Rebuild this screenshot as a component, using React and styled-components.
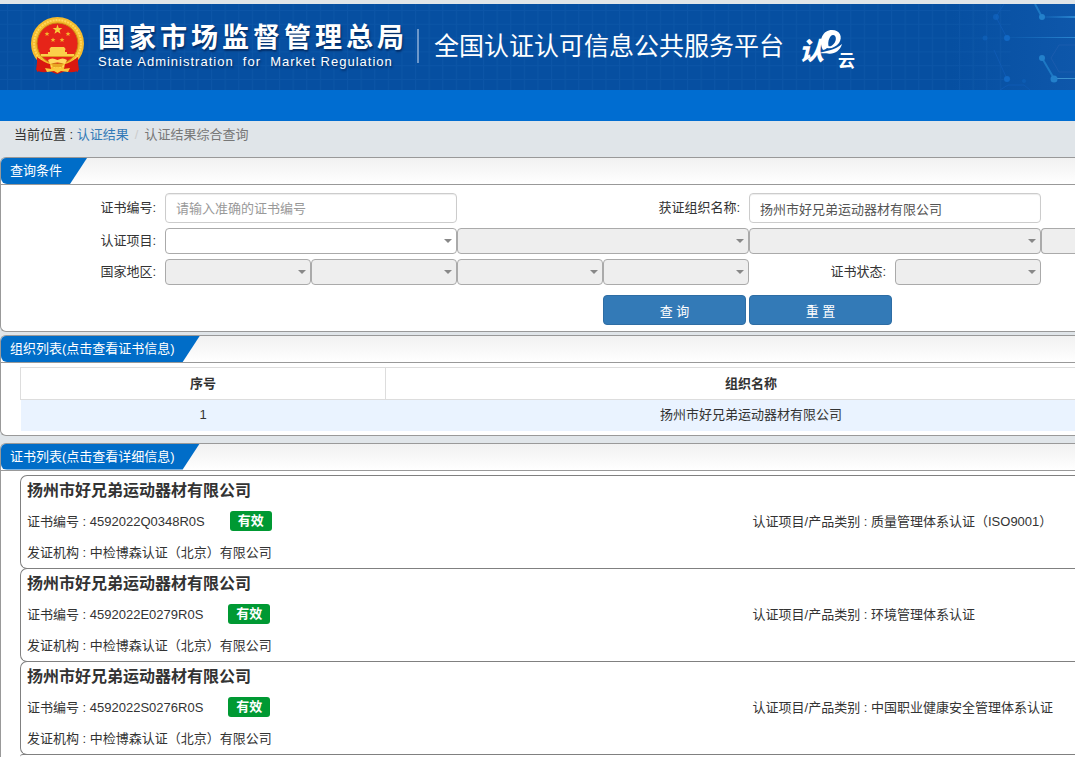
import React, { useState } from "react";
import styled, { createGlobalStyle } from "styled-components";

const certList = [
  {
    id: 1,
    org: "扬州市好兄弟运动器材有限公司",
    number: "4592022Q0348R0S",
    agency: "中检博森认证（北京）有限公司",
    category: "质量管理体系认证（ISO9001）",
  },
  {
    id: 2,
    org: "扬州市好兄弟运动器材有限公司",
    number: "4592022E0279R0S",
    agency: "中检博森认证（北京）有限公司",
    category: "环境管理体系认证",
  },
  {
    id: 3,
    org: "扬州市好兄弟运动器材有限公司",
    number: "4592022S0276R0S",
    agency: "中检博森认证（北京）有限公司",
    category: "中国职业健康安全管理体系认证",
  },
];

const orgList = [{ id: 1, name: "扬州市好兄弟运动器材有限公司" }];

const Emblem = () => (
  <StEmblem viewBox="0 0 53 57" aria-hidden="true">
    <path d="M7 38 L5 53 Q12 57 18 54 L26 57 L35 54 Q41 57 48 53 L46 38 Z" fill="#d3170f" />
    <circle cx="26.5" cy="26.5" r="26.5" fill="#f6bb2c" />
    <circle cx="26.5" cy="26.5" r="23.5" fill="none" stroke="#ffd75a" strokeWidth="2" strokeDasharray="2 1" />
    <circle cx="26.5" cy="26.5" r="20.5" fill="#e62419" stroke="#c98914" strokeWidth="1" />
    <path d="M26.5 7.5 l1.2 3.4 3.6 .1 -2.8 2.2 1 3.5 -3 -2 -3 2 1 -3.5 -2.8 -2.2 3.6 -.1 z" fill="#f8cf3c" />
    <path
      d="M16 14.5 l.7 1.6 1.8 .1 -1.4 1.1 .5 1.7 -1.6 -1 -1.5 1 .4 -1.7 -1.3 -1.1 1.8 -.1z M37 14.5 l.7 1.6 1.8 .1 -1.4 1.1 .5 1.7 -1.6 -1 -1.5 1 .4 -1.7 -1.3 -1.1 1.8 -.1z M22 20.5 l.7 1.6 1.8 .1 -1.4 1.1 .5 1.7 -1.6 -1 -1.5 1 .4 -1.7 -1.3 -1.1 1.8 -.1z M31 20.5 l.7 1.6 1.8 .1 -1.4 1.1 .5 1.7 -1.6 -1 -1.5 1 .4 -1.7 -1.3 -1.1 1.8 -.1z"
      fill="#f3b52d"
    />
    <path d="M20 30 h13 l2 2.5 h-1 v2.5 h2 v2 h7 v2.5 H10 V37 h7 v-2 h2 v-2.5 h-1 z" fill="#fbd04a" />
    <path d="M10 39.5 h33" stroke="#e09a20" strokeWidth="1" />
    <path d="M6 40 Q14 46 19 47 L20 52 Q14 51 6 55 Z M47 40 Q39 46 34 47 L33 52 Q39 51 47 55 Z" fill="#d9180f" />
    <path d="M17 43 Q21 40 26.5 43 Q32 40 36 43 L34 47 Q26.5 44 19 47 Z" fill="#ffd95f" />
    <path d="M21 47 H32 L31 50 H22 Z" fill="#e9a623" />
    <path d="M14 51 L20 52 L26.5 50 L33 52 L39 51 L37 55 L30 54 L26.5 56 L23 54 L16 55 Z" fill="#fbc93d" />
  </StEmblem>
);

const CloudLogo = () => (
  <StCloudLogo viewBox="0 0 58 42" role="img" aria-label="认e云">
    <text x="0" y="31" fontSize="25" fontWeight="900" fontStyle="italic" fill="#fff">
      认
    </text>
    <path
      d="M24 21 C19 11 24 1 33 1 C41 1 44 8 40 14 C37 18 32 20 28 19 C27 20 25 21 24 21 Z M29.5 17 C28.5 12 31 6 34 6 C38 6 38 13 33 16.5 C31.5 17.5 30 17.6 29.5 17 Z"
      fill="#fff"
      fillRule="evenodd"
    />
    <path d="M20 24 C28 22 36 21 43 15 C41 22 35 25.5 29 24.5 C26 23.8 22 24.5 20 24 Z" fill="#fff" />
    <text x="39" y="38" fontSize="17" fontWeight="700" fill="#fff">
      云
    </text>
  </StCloudLogo>
);

// 头部右侧的电路装饰
const Circuit = () => (
  <StCircuit viewBox="0 0 125 86" aria-hidden="true">
    <defs>
      <linearGradient id="trace" x1="0" x2="1">
        <stop offset="0" stopColor="#1c79c9" stopOpacity="0.1" />
        <stop offset="1" stopColor="#2b86d0" />
      </linearGradient>
      <linearGradient id="glow" x1="0" x2="1">
        <stop offset="0" stopColor="#1a63b8" stopOpacity="0" />
        <stop offset="1" stopColor="#1a63b8" stopOpacity="0.4" />
      </linearGradient>
    </defs>
    <rect width="125" height="86" fill="url(#glow)" />
    <path d="M54 0 L46 13 L57 34 M44 46 L57 75 M50 86 L58 81 L74 81 L80 86" fill="none" stroke="#0f5ab3" />
    <path d="M85 0 L92 13 M92 54 L104 74.5" fill="none" stroke="#1d78c4" strokeWidth="2" />
    <rect x="92" y="12" width="33" height="2" fill="url(#trace)" />
    <rect x="57" y="33" width="68" height="1" fill="url(#trace)" />
    <rect x="104" y="74" width="21" height="1" fill="#3b91cf" />
    <path d="M125 41 H109 L101 54 L109 68 H125" fill="none" stroke="#1b5cae" />
    <g fill="#1268c4">
      <circle cx="46" cy="13" r="3" opacity="0.6" />
      <circle cx="35" cy="34" r="2.5" opacity="0.5" />
      <circle cx="57" cy="34" r="3" />
      <circle cx="57" cy="75" r="3" />
      <circle cx="74" cy="77" r="2" opacity="0.4" />
    </g>
    <g fill="#2380cb">
      <circle cx="92" cy="13" r="3" />
      <circle cx="92" cy="54" r="3" />
      <circle cx="104" cy="75" r="3.5" />
    </g>
  </StCircuit>
);

const SelectField = ({ label, span = 1, disabled, cut }) => (
  <StSelectBox $span={span}>
    <StSelect aria-label={label} disabled={disabled} $cut={cut}>
      <option></option>
    </StSelect>
    {!cut && <StArrow />}
  </StSelectBox>
);

const Panel = ({ title, gap, open, children }) => (
  <StPanel $gap={gap} $open={open}>
    <StPanelHead>
      <StTab>{title}</StTab>
    </StPanelHead>
    {children}
  </StPanel>
);

const App = () => {
  const [certNo, setCertNo] = useState("");
  const [orgName, setOrgName] = useState("扬州市好兄弟运动器材有限公司");

  const onSubmitHandler = (event) => {
    event.preventDefault();
  };

  const onResetHandler = () => {
    setCertNo("");
    setOrgName("");
  };

  return (
    <>
      <GlobalStyle />
      <StHeader>
        <StGridLines aria-hidden="true">
          <defs>
            <pattern id="cells" width="13.6" height="13.8" x="7" y="6" patternUnits="userSpaceOnUse">
              <path d="M0.5 0 V14 M0 0.5 H14" stroke="#1560b0" strokeOpacity="0.4" fill="none" />
            </pattern>
          </defs>
          <rect width="100%" height="100%" fill="url(#cells)" />
        </StGridLines>
        <Circuit />
        <StBrand>
          <Emblem />
          <StBureau>
            <StBureauName>国家市场监督管理总局</StBureauName>
            <StBureauEn>State Administration  for  Market Regulation</StBureauEn>
          </StBureau>
          <StDivider />
          <StPlatform>全国认证认可信息公共服务平台</StPlatform>
          <CloudLogo />
        </StBrand>
      </StHeader>
      <StNav />

      <StBreadcrumb>
        当前位置 :&nbsp;<a href="#result">认证结果</a>
        <StSlash>/</StSlash>
        <StCurrent>认证结果综合查询</StCurrent>
      </StBreadcrumb>

      <Panel title="查询条件" gap={3}>
        <StForm onSubmit={onSubmitHandler}>
          <StRow $height={30}>
            <StLabel htmlFor="certNo">证书编号:</StLabel>
            <StInput
              id="certNo"
              type="text"
              placeholder="请输入准确的证书编号"
              value={certNo}
              onChange={(e) => setCertNo(e.target.value)}
            />
            <StLabel htmlFor="orgName" $span={2}>获证组织名称:</StLabel>
            <StInput
              id="orgName"
              type="text"
              value={orgName}
              onChange={(e) => setOrgName(e.target.value)}
            />
          </StRow>
          <StRow $height={26}>
            <StLabel as="span">认证项目:</StLabel>
            <SelectField label="认证项目" span={2} />
            <SelectField label="认证项目二级" span={2} disabled />
            <SelectField label="认证项目三级" span={2} disabled />
            <SelectField label="认证项目四级" disabled cut />
          </StRow>
          <StRow $height={26}>
            <StLabel as="span">国家地区:</StLabel>
            <SelectField label="国家" disabled />
            <SelectField label="省" disabled />
            <SelectField label="市" disabled />
            <SelectField label="区" disabled />
            <StLabel as="span">证书状态:</StLabel>
            <SelectField label="证书状态" disabled />
          </StRow>
          <StActions $height={30}>
            <StButton type="submit" $start={5}>查 询</StButton>
            <StButton type="button" onClick={onResetHandler}>重 置</StButton>
          </StActions>
        </StForm>
      </Panel>

      <Panel title="组织列表(点击查看证书信息)" gap={7}>
        <StTableWrap>
          <StTable>
            <thead>
              <tr>
                <StTh $width="33.3%">序号</StTh>
                <StTh>组织名称</StTh>
              </tr>
            </thead>
            <tbody>
              {orgList.map((org) => (
                <tr key={org.id}>
                  <StTd>{org.id}</StTd>
                  <StTd>{org.name}</StTd>
                </tr>
              ))}
            </tbody>
          </StTable>
        </StTableWrap>
      </Panel>

      <Panel title="证书列表(点击查看详细信息)" open>
        <StCards>
          {certList.map((cert) => (
            <StCard key={cert.id}>
              <StCardTitle>{cert.org}</StCardTitle>
              <StCardRow>
                <StNumber>
                  证书编号 : {cert.number}
                  <StBadge>有效</StBadge>
                </StNumber>
                <span>认证项目/产品类别 : {cert.category}</span>
              </StCardRow>
              <StCardRow>
                <span>发证机构 : {cert.agency}</span>
              </StCardRow>
            </StCard>
          ))}
          <StCardEdge />
        </StCards>
      </Panel>
    </>
  );
};

export default App;

const GlobalStyle = createGlobalStyle`
  * {
    box-sizing: border-box;
  }

  body {
    margin: 0;
    padding-top: 4px;
    overflow-x: hidden;
    background-color: #e0e5e9;
    color: #333;
    font-family: "Liberation Sans", "Noto Sans CJK SC", sans-serif;
    font-size: 13px;
    line-height: 20px;
  }

  input, select, button {
    font-family: inherit;
    font-size: 13px;
  }

  a {
    color: #337ab7;
    text-decoration: none;
  }
`;

const StHeader = styled.header`
  position: relative;
  height: 86px;
  background-color: #064fa1;
  color: #fff;
`;

const StGridLines = styled.svg`
  position: absolute;
  top: 0;
  left: 0;
  width: 94%;
  height: 100%;
`;

const StCircuit = styled.svg`
  position: absolute;
  top: 0;
  right: 0;
  width: 125px;
  height: 86px;
`;

const StBrand = styled.div`
  position: relative;
  display: flex;
  align-items: center;
  height: 83px;
  padding-left: 31px;
  white-space: nowrap;
`;

const StEmblem = styled.svg`
  width: 53px;
  height: 57px;
  margin-right: 14px;
  flex-shrink: 0;
`;

const StBureau = styled.div`
  width: 319px;
  text-shadow: 1px 2px 2px rgba(0, 20, 60, 0.6);
`;

const StBureauName = styled.div`
  font-size: 27px;
  font-weight: 700;
  line-height: 32px;
  letter-spacing: 4px;
`;

const StBureauEn = styled.div`
  font-size: 13px;
  line-height: 16px;
  letter-spacing: 1px;
  white-space: pre;
`;

const StDivider = styled.div`
  width: 2px;
  height: 34px;
  margin-right: 15px;
  background-color: #6d98cb;
`;

const StPlatform = styled.div`
  font-size: 25px;
  line-height: 40px;
`;

const StCloudLogo = styled.svg`
  width: 58px;
  height: 42px;
  margin: 8px 0 0 15px;
  font-family: "Noto Sans CJK SC", sans-serif;
`;

const StNav = styled.nav`
  height: 31px;
  background-color: #006dd1;
`;

const StBreadcrumb = styled.nav`
  display: flex;
  height: 36px;
  padding: 4px 14px;
`;

const StSlash = styled.span`
  padding: 0 6px;
  color: #ccc;
`;

const StCurrent = styled.span`
  color: #777;
`;

const StPanel = styled.section`
  margin-bottom: ${({ $gap }) => $gap || 0}px;
  border: 1px solid #999;
  border-right: none;
  border-bottom-width: ${({ $open }) => ($open ? 0 : 1)}px;
  border-radius: ${({ $open }) => ($open ? "6px 0 0 0" : "6px 0 0 6px")};
  background-color: #fff;
  overflow: hidden;
`;

const StPanelHead = styled.div`
  height: 27px;
  border-bottom: 1px solid #999;
  background: linear-gradient(#f1f1f1, #fff);
`;

const StTab = styled.h2`
  display: inline-block;
  height: 26px;
  margin: 0;
  padding: 0 25px 0 9px;
  border-radius: 0 0 0 6px;
  background-color: #006dc8;
  clip-path: polygon(0 0, 100% 0, calc(100% - 17px) 100%, 0 100%);
  color: #fff;
  font-size: 13px;
  font-weight: 400;
  line-height: 26px;
`;

const StForm = styled.form`
  display: grid;
  gap: 5px;
  padding: 8px 0 6px 18px;
`;

const StRow = styled.div`
  display: grid;
  grid-template-columns: repeat(7, 1fr) 34px;
  height: ${({ $height }) => $height}px;
`;

const StActions = styled(StRow)`
  margin-top: 5px;
`;

const StLabel = styled.label`
  grid-column: span ${({ $span }) => $span || 1};
  align-self: center;
  padding-right: 9px;
  text-align: right;
`;

const StInput = styled.input`
  grid-column: span 2;
  min-width: 0;
  padding: 0 10px;
  border: 1px solid #ccc;
  border-radius: 4px;
  background-color: #fff;
  color: #555;
  box-shadow: inset 0 1px 1px rgba(0, 0, 0, 0.075);

  &::placeholder {
    color: #999;
  }
`;

const StSelectBox = styled.div`
  position: relative;
  grid-column: span ${({ $span }) => $span};
`;

const StSelect = styled.select`
  display: block;
  appearance: none;
  width: 100%;
  height: 100%;
  padding: 0 20px 0 8px;
  border: 1px solid #aaa;
  border-right-width: ${({ $cut }) => ($cut ? 0 : 1)}px;
  border-radius: ${({ $cut }) => ($cut ? "4px 0 0 4px" : "4px")};
  background-color: #fff;
  color: #444;

  &:disabled {
    background-color: #eee;
    opacity: 1;
  }
`;

const StArrow = styled.span`
  position: absolute;
  top: 11px;
  right: 5px;
  border: 4px solid transparent;
  border-top-color: #888;
  border-bottom: none;
  pointer-events: none;
`;

const StButton = styled.button`
  grid-column-start: ${({ $start }) => $start || "auto"};
  margin-right: 3px;
  padding: 0;
  border: 1px solid #2e6da4;
  border-radius: 4px;
  background-color: #337ab7;
  color: #fff;
  cursor: pointer;
`;

const StTableWrap = styled.div`
  margin: 4px 0 4px 19px;
  overflow: hidden;
`;

// 表格比窗口略宽，右侧被裁掉
const StTable = styled.table`
  width: 104%;
  table-layout: fixed;
  border-collapse: collapse;
  text-align: center;
`;

const StTh = styled.th`
  width: ${({ $width }) => $width || "auto"};
  height: 32px;
  padding: 0;
  border: 1px solid #ddd;
  line-height: 20px;
`;

const StTd = styled.td`
  height: 31px;
  padding: 0;
  background-color: #eaf3ff;
`;

const StCards = styled.div`
  padding: 4px 0 0 19px;
`;

const StCard = styled.article`
  margin-bottom: -1px;
  padding-left: 6px;
  border: 1px solid #808080;
  border-right: none;
  border-radius: 7px 0 0 7px;
`;

// 下一张卡片的上边缘
const StCardEdge = styled.div`
  height: 3px;
  border-top: 1px solid #808080;
  border-radius: 7px 0 0 0;
`;

const StCardTitle = styled.h3`
  margin: 0;
  font-size: 16px;
  font-weight: 700;
  line-height: 30px;
`;

const StCardRow = styled.div`
  display: grid;
  grid-template-columns: 9fr 4fr;
  line-height: 31px;
  white-space: nowrap;
`;

const StNumber = styled.div`
  display: flex;
  align-items: center;
`;

const StBadge = styled.span`
  margin-left: 25px;
  padding: 0 8px;
  border-radius: 3px;
  background-color: #093;
  color: #fff;
  font-weight: 700;
  line-height: 20px;
`;
